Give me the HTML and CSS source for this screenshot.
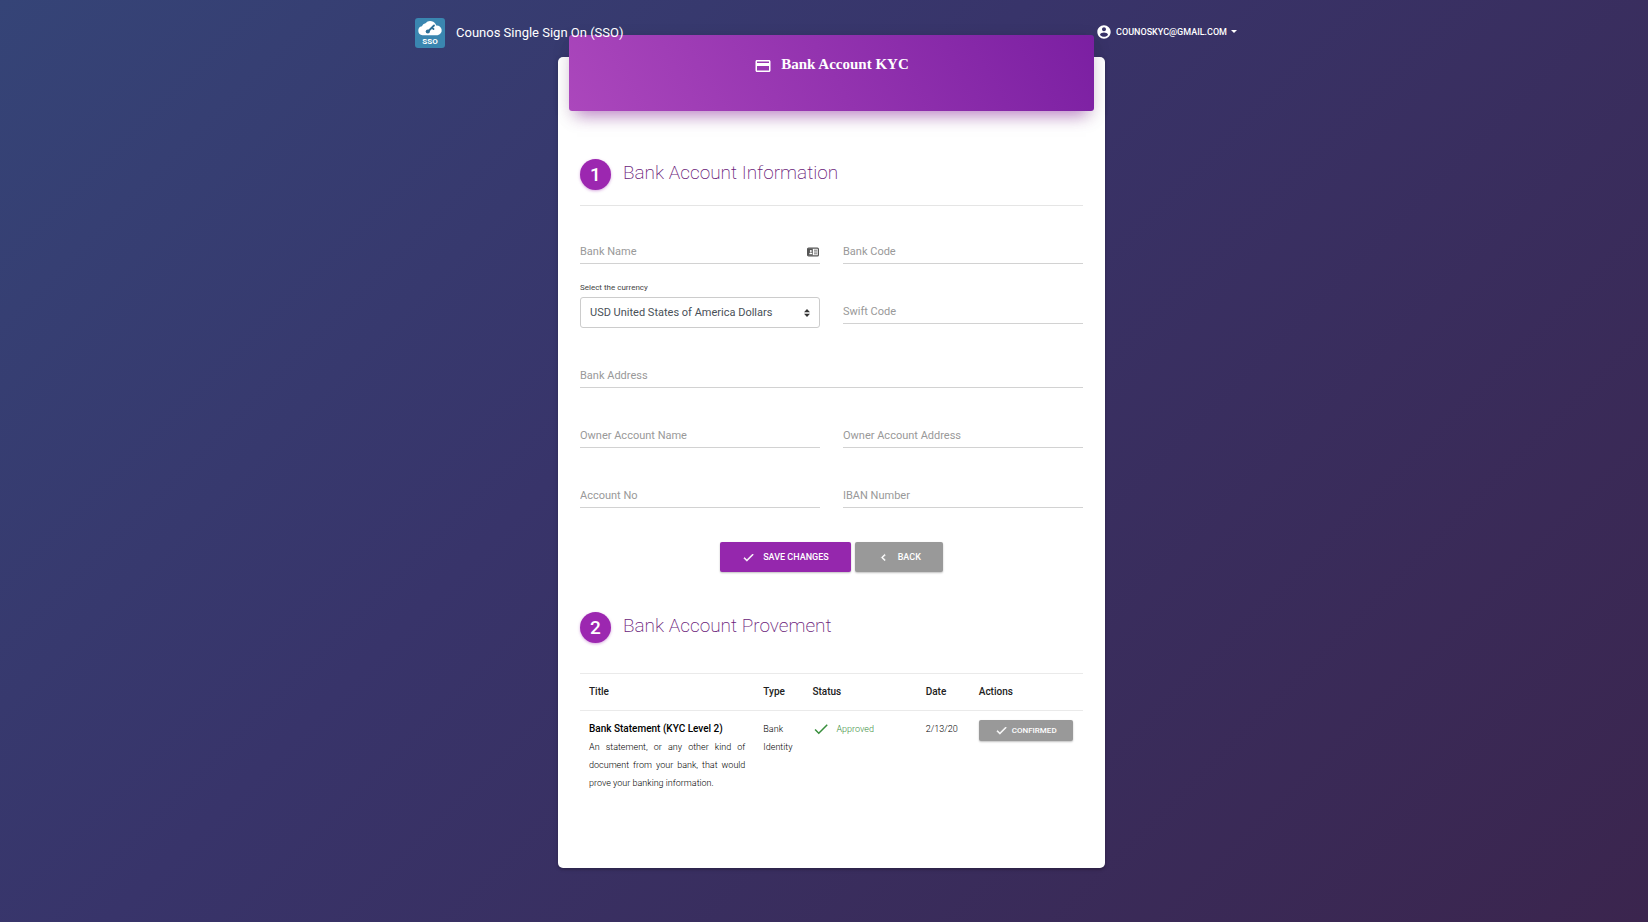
FILE: index.html
```html
<!DOCTYPE html>
<html lang="en">
  <head>
    <meta charset="UTF-8" />
    <meta name="viewport" content="width=device-width, initial-scale=1.0" />
    <title>Bank Account KYC</title>
    <link rel="stylesheet" href="styles.css">
  </head>
  <body>
    <nav class="navbar">
      <a class="brand" href="#">
        <svg class="logo" viewBox="0 0 30 30" aria-hidden="true">
          <rect width="30" height="30" rx="3" fill="#3a86b0" />
          <path fill="#fff" d="M7.500 17.200a4.500 4.500 0 0 1-.6-8.900 4.600 4.600 0 0 1 3.600-3.100 6.200 6.200 0 0 1 10.700 2.400 4.800 4.800 0 0 1 1.300 9.600z" />
          <path fill="none" stroke="#2d6f96" stroke-width="1.800" stroke-linecap="round" d="M13 13.500l6-6M17 9.500l1.500 1.500" />
          <circle cx="12.800" cy="13.500" r="2.100" fill="#2d6f96" />
          <text x="15" y="26" class="logo-text" text-anchor="middle">SSO</text>
        </svg>
        Counos Single Sign On (SSO)
      </a>
      <button class="user-menu" type="button">
        <svg class="icon-user" viewBox="0 0 24 24" aria-hidden="true">
          <path fill="currentColor" d="M12 2C6.480 2 2 6.480 2 12s4.480 10 10 10 10-4.480 10-10S17.520 2 12 2zm0 3c1.660 0 3 1.340 3 3s-1.340 3-3 3-3-1.340-3-3 1.340-3 3-3zm0 14.200c-2.500 0-4.710-1.280-6-3.220.03-1.990 4-3.080 6-3.080 1.990 0 5.970 1.090 6 3.080-1.290 1.940-3.500 3.220-6 3.220z" />
        </svg>
        counoskyc@gmail.com
        <span class="caret"></span>
      </button>
    </nav>

    <main class="card">
      <header class="card-header">
        <svg class="icon-card" viewBox="0 0 24 24" aria-hidden="true">
          <path fill="currentColor" d="M20 4H4c-1.110 0-1.990.89-1.990 2L2 18c0 1.110.89 2 2 2h16c1.110 0 2-.89 2-2V6c0-1.110-.89-2-2-2zm0 14H4v-6h16v6zm0-10H4V6h16v2z" />
        </svg>
        <h1>Bank Account KYC</h1>
      </header>

      <section>
        <h2 class="step"><span class="step-number">1</span>Bank Account Information</h2>
        <form class="bank-form">
          <div class="field field-first with-icon">
            <input type="text" id="bankName" placeholder="Bank Name" aria-label="Bank Name" />
            <svg class="icon-contact" viewBox="0 0 12 10" aria-hidden="true">
              <rect x=".6" y="1.100" width="10.800" height="7.800" rx="1" fill="#fff" stroke="#555" stroke-width="1.200" />
              <path fill="#555" d="M1 1.500h4.800v7H1z" />
              <circle cx="3.800" cy="3.900" r="1" fill="#fff" />
              <path fill="#fff" d="M2.200 7.200c0-2.400 3.200-2.400 3.200 0z" />
              <path stroke="#555" stroke-width=".8" d="M7 3.200h3.200M7 5h3.200M7 6.800h3.200" />
            </svg>
          </div>
          <div class="field field-first">
            <input type="text" id="bankCode" placeholder="Bank Code" aria-label="Bank Code" />
          </div>
          <div class="field field-select">
            <label for="currency">Select the currency</label>
            <div class="select-wrap">
              <select id="currency">
                <option>USD United States of America Dollars</option>
              </select>
              <svg class="icon-sort" viewBox="0 0 6 8" aria-hidden="true">
                <path fill="currentColor" d="M3 0l3 3.200H0zM3 8L0 4.800h6z" />
              </svg>
            </div>
          </div>
          <div class="field field-swift">
            <input type="text" id="swiftCode" placeholder="Swift Code" aria-label="Swift Code" />
          </div>
          <div class="field wide">
            <input type="text" id="bankAddress" placeholder="Bank Address" aria-label="Bank Address" />
          </div>
          <div class="field">
            <input type="text" id="ownerName" placeholder="Owner Account Name" aria-label="Owner Account Name" />
          </div>
          <div class="field">
            <input type="text" id="ownerAddress" placeholder="Owner Account Address" aria-label="Owner Account Address" />
          </div>
          <div class="field">
            <input type="text" id="accountNo" placeholder="Account No" aria-label="Account No" />
          </div>
          <div class="field">
            <input type="text" id="iban" placeholder="IBAN Number" aria-label="IBAN Number" />
          </div>
          <div class="form-actions">
            <button class="btn btn-primary" type="button">
              <svg class="icon" viewBox="0 0 24 24" aria-hidden="true">
                <path fill="currentColor" stroke="currentColor" d="M9 16.170L4.830 12l-1.420 1.410L9 19 21 7l-1.410-1.410z" />
              </svg>
              Save Changes
            </button>
            <button class="btn" type="button">
              <svg class="icon" viewBox="0 0 24 24" aria-hidden="true">
                <path fill="currentColor" stroke="currentColor" d="M15.410 7.410L14 6l-6 6 6 6 1.410-1.410L10.830 12z" />
              </svg>
              Back
            </button>
          </div>
        </form>
      </section>

      <section>
        <h2 class="step step-second"><span class="step-number">2</span>Bank Account Provement</h2>
        <table class="documents">
          <thead>
            <tr>
              <th class="col-title">Title</th>
              <th class="col-type">Type</th>
              <th class="col-status">Status</th>
              <th class="col-date">Date</th>
              <th class="col-actions">Actions</th>
            </tr>
          </thead>
          <tbody>
            <tr>
              <td>
                <strong>Bank Statement (KYC Level 2)</strong>
                <p>An statement, or any other kind of document from your bank, that would prove your banking information.</p>
              </td>
              <td>Bank Identity</td>
              <td>
                <span class="approved">
                  <svg class="icon-status" viewBox="0 0 24 24" aria-hidden="true">
                    <path fill="currentColor" d="M9 16.170L4.830 12l-1.420 1.410L9 19 21 7l-1.410-1.410z" />
                  </svg>
                  Approved
                </span>
              </td>
              <td>2/13/20</td>
              <td>
                <button class="btn btn-sm" type="button">
                  <svg class="icon" viewBox="0 0 24 24" aria-hidden="true">
                    <path fill="currentColor" stroke="currentColor" d="M9 16.170L4.830 12l-1.420 1.410L9 19 21 7l-1.410-1.410z" />
                  </svg>
                  Confirmed
                </button>
              </td>
            </tr>
          </tbody>
        </table>
      </section>
    </main>
  </body>
</html>
```
FILE: styles.css
```css
* {
  box-sizing: border-box;
}
body {
  margin: 0;
  padding: 0 0 54px 15px;
  min-height: 100vh;
  font-family: Roboto, "Liberation Sans", sans-serif;
  font-size: 11px;
  color: #212121;
  background: linear-gradient(135deg, #354477 0%, #38346a 40%, #3b254e 100%);
}
.navbar {
  display: flex;
  align-items: center;
  justify-content: space-between;
  position: relative;
  z-index: 2;
  max-width: 833px;
  height: 57px;
  margin: 0 auto;
  padding: 8px 11px 0 0;
}
.brand {
  display: flex;
  align-items: center;
  gap: 11px;
  color: #fff;
  font-size: 13px;
  text-decoration: none;
}
.logo {
  width: 30px;
  height: 30px;
}
.logo-text {
  fill: #fff;
  font-size: 8px;
  font-weight: 700;
}
.user-menu {
  display: flex;
  align-items: center;
  padding: 0 0 2px;
  border: none;
  background: none;
  color: #fff;
  font-family: inherit;
  font-size: 9px;
  font-weight: 500;
  text-transform: uppercase;
}
.icon-user {
  width: 16px;
  height: 16px;
  margin-right: 4px;
}
.caret {
  margin-left: 4px;
  border: 3px solid transparent;
  border-top-color: #fff;
  border-bottom: 0;
}
.card {
  max-width: 547px;
  min-height: 811px;
  margin: 0 auto;
  padding: 0 22px 60px;
  border-radius: 5px;
  background: #fff;
  box-shadow: 0 2px 2px rgba(0, 0, 0, 0.14), 0 1px 5px rgba(0, 0, 0, 0.12);
}
.card-header {
  display: flex;
  justify-content: center;
  gap: 9px;
  position: relative;
  top: -22px;
  height: 76px;
  margin: 0 -11px -22px;
  padding-top: 20px;
  border-radius: 3px;
  color: #fff;
  background: linear-gradient(60deg, #ab47bc, #7b1fa2);
  box-shadow: 0 12px 15px -8px rgba(156, 39, 176, 0.5), 0 5px 18px rgba(0, 0, 0, 0.12);
}
.card-header h1 {
  margin: 0;
  font-family: "Roboto Slab", "Liberation Serif", serif;
  font-size: 15px;
  font-weight: 700;
  line-height: 18px;
}
.icon-card {
  width: 18px;
  height: 18px;
  margin-top: 2px;
}
.step {
  display: flex;
  gap: 12px;
  margin: 0;
  padding: 48px 0 15px;
  color: #6a1b7a;
  font-size: 19px;
  font-weight: 200;
  line-height: 28px;
}
.step-second {
  padding-top: 40px;
}
.step-number {
  width: 31px;
  height: 31px;
  border-radius: 50%;
  color: #fff;
  background: #9c27b0;
  font-weight: 500;
  line-height: 31px;
  text-align: center;
  box-shadow: 0 1px 3px rgba(156, 39, 176, 0.4);
}
.bank-form {
  display: grid;
  grid-template-columns: 1fr 1fr;
  column-gap: 23px;
  border-top: 1px solid #e5e5e5;
}
.field {
  display: flex;
  flex-direction: column;
  justify-content: flex-end;
  height: 60px;
}
.field-first {
  height: 58px;
}
.field input {
  width: 100%;
  height: 24px;
  padding: 0;
  border: none;
  border-bottom: 1px solid #d2d2d2;
  background: none;
  font-family: inherit;
  font-size: 11px;
}
.field input::placeholder {
  color: #999;
}
.with-icon {
  position: relative;
}
.icon-contact {
  position: absolute;
  right: 1px;
  bottom: 7px;
  width: 12px;
  height: 10px;
}
.field-select,
.field-swift {
  height: 64px;
}
.field-swift {
  padding-bottom: 4px;
}
.field-select label {
  margin-bottom: 5px;
  color: #444;
  font-size: 8px;
}
.select-wrap {
  position: relative;
}
.select-wrap select {
  appearance: none;
  display: block;
  width: 100%;
  height: 31px;
  padding: 0 9px;
  border: 1px solid #ccc;
  border-radius: 3px;
  color: #495057;
  background: #fff;
  font-family: inherit;
  font-size: 11px;
}
.icon-sort {
  position: absolute;
  right: 10px;
  top: 12px;
  width: 6px;
  height: 8px;
  color: #333;
}
.wide,
.form-actions {
  grid-column: 1 / -1;
}
.form-actions {
  display: flex;
  justify-content: center;
  gap: 4px;
  padding-top: 34px;
}
.btn {
  display: flex;
  align-items: center;
  gap: 8px;
  height: 30px;
  padding: 0 22px;
  border: none;
  border-radius: 2px;
  color: #fff;
  background: #999;
  font-family: inherit;
  font-size: 9px;
  font-weight: 500;
  text-transform: uppercase;
  box-shadow: 0 1px 2px rgba(0, 0, 0, 0.25);
  cursor: pointer;
}
.btn-primary {
  background: #9527ad;
}
.icon {
  width: 13px;
  height: 13px;
}
.btn-sm {
  height: 21px;
  gap: 4px;
  padding: 0 16px;
  font-size: 8px;
}
.documents {
  width: 100%;
  margin-top: 15px;
  border-collapse: collapse;
  table-layout: fixed;
  font-size: 9px;
  line-height: 18px;
}
.documents th,
.documents td {
  padding: 9px;
  border-top: 1px solid #eaeaea;
  text-align: left;
  vertical-align: top;
}
.documents th {
  font-size: 10px;
  font-weight: 500;
}
.documents td {
  color: #000;
  font-weight: 300;
}
.documents strong {
  font-size: 10px;
  font-weight: 500;
  white-space: nowrap;
}
.documents p {
  margin: 0;
  text-align: justify;
}
.col-title {
  width: 174px;
}
.col-type {
  width: 49px;
}
.col-date {
  width: 53px;
}
.col-status,
.col-actions {
  width: 113px;
}
.approved {
  display: flex;
  align-items: center;
  gap: 6px;
  color: #388e3c;
}
.icon-status {
  width: 18px;
  height: 18px;
}
```
